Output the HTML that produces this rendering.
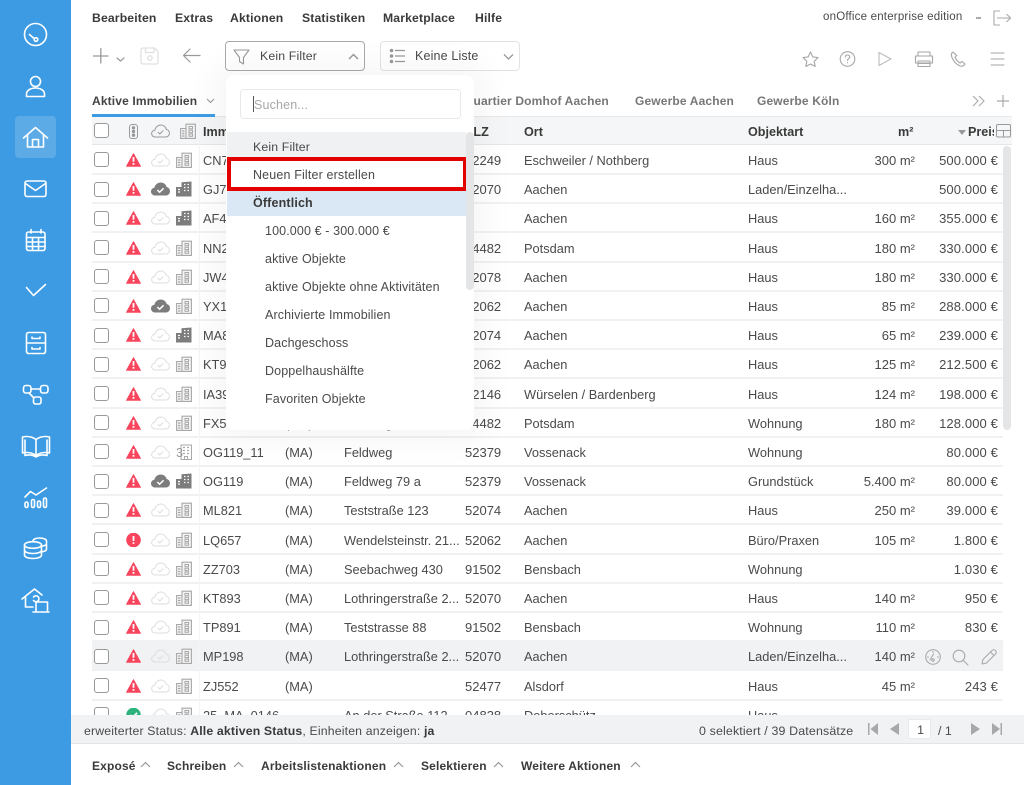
<!DOCTYPE html>
<html lang="de">
<head>
<meta charset="utf-8">
<title>onOffice</title>
<style>
*{box-sizing:border-box}
html,body{margin:0;padding:0;width:1024px;height:785px;overflow:hidden;background:#fff}
body{font-family:"Liberation Sans",sans-serif;font-size:13px;color:#4a4a4a;position:relative}
.a{position:absolute;white-space:nowrap}
#side{position:absolute;left:0;top:0;width:71px;height:785px;background:#3d9be3}
#sidebox{position:absolute;left:15px;top:116px;width:41px;height:42px;background:rgba(255,255,255,.16);border-radius:4px}
.m{position:absolute;top:11px;font-weight:bold;font-size:12.2px;color:#3a3a3a;letter-spacing:.15px;white-space:nowrap}
.tab{position:absolute;top:94px;font-size:12px;font-weight:bold;color:#777;letter-spacing:.15px;white-space:nowrap}
#head{position:absolute;left:92px;top:116px;width:920px;height:29px;background:#f5f6f7;border-top:1px solid #e8e9ea;border-bottom:1px solid #e6e7e8}
.h{position:absolute;top:125px;font-weight:bold;font-size:12.6px;color:#3a3a3a;white-space:nowrap}
.r{position:absolute;left:92px;width:911px;height:29.2px;border-bottom:2px solid #f0f1f2;overflow:hidden}
.r.hover{background:#f1f2f4}
.r span{position:absolute;top:7px;white-space:nowrap;font-size:12.8px}
.cb{position:absolute;left:2px;top:6.5px;width:15px;height:15px;border:1.5px solid #999;border-radius:3px;background:#fff}
.r svg{position:absolute}
.i1{left:34px;top:7px;width:15px;height:14px}
.i2{left:59px;top:7px;width:19px;height:14px}
.i3{left:84px;top:6px;width:16px;height:16px}
.c1{left:111px}.c2{left:193px}.c3{left:252px}.c5{left:432px}.c6{left:656px}
.r span.c4{left:373px;font-size:13px}
.r span.c7{right:88px;font-size:13px}
.r span.c8{right:5px;font-size:13px;letter-spacing:.12px}
#dd{position:absolute;left:226px;top:75px;width:248px;height:355px;background:#fff;border-radius:8px;box-shadow:0 0 30px 14px rgba(0,0,0,.035)}
.o{position:absolute;left:265px;font-size:12.5px;color:#4a4a4a;white-space:nowrap;letter-spacing:.12px}
#stat{position:absolute;left:71px;top:715px;width:953px;height:29px;background:#f1f2f4;border-bottom:1px solid #e3e4e6}
.b{position:absolute;top:759px;font-weight:bold;font-size:12px;color:#3a3a3a;white-space:nowrap;letter-spacing:.15px}
</style>
</head>
<body>
<svg width="0" height="0" style="position:absolute">
<defs>
<symbol id="tri" viewBox="0 0 15 14"><path d="M7.5 .6 14.6 13.4H.4Z" fill="#f8445c" stroke="#f8445c" stroke-width=".8" stroke-linejoin="round"/><path d="M7.5 4V8.8M7.5 10v1.700" stroke="#fff" stroke-width="1.800"/></symbol>
<symbol id="circ" viewBox="0 0 15 14"><circle cx="7.5" cy="7" r="7.3" fill="#f8445c"/><path d="M7.5 3V8M7.5 9.3v1.6" stroke="#fff" stroke-width="1.8"/></symbol>
<symbol id="ok" viewBox="0 0 15 14"><circle cx="7.5" cy="7" r="7.3" fill="#2db27d"/><path d="M4 7 6.7 9.6 11 4.8" stroke="#fff" stroke-width="1.8" fill="none"/></symbol>
<symbol id="cl" viewBox="0 0 19 14"><path d="M5 13H4.200C2 13 .6 11.400 .6 9.600 .6 7.700 2 6.300 3.800 6.200 4.400 3.400 6.800 1 9.800 1c2.800 0 5 1.900 5.500 4.500 1.900.2 3.100 1.800 3.100 3.800 0 2-1.500 3.700-3.600 3.700Z" fill="none" stroke="#dedede" stroke-width="1"/><path d="M6.800 8 8.800 10 12.200 6.500" fill="none" stroke="#dedede" stroke-width="1"/></symbol>
<symbol id="clh" viewBox="0 0 19 14"><path d="M5 13H4.200C2 13 .6 11.400 .6 9.600 .6 7.700 2 6.300 3.800 6.200 4.400 3.400 6.800 1 9.800 1c2.800 0 5 1.900 5.500 4.500 1.900.2 3.100 1.800 3.100 3.800 0 2-1.500 3.700-3.600 3.700Z" fill="none" stroke="#999" stroke-width="1"/><path d="M6.800 8 8.800 10 12.200 6.500" fill="none" stroke="#999" stroke-width="1"/></symbol>
<symbol id="clf" viewBox="0 0 19 14"><path d="M5 13.500H4.200C1.800 13.500 0 11.600 0 9.600 0 7.500 1.500 5.900 3.400 5.700 4 2.800 6.600 .5 9.800 .5c3 0 5.300 2 5.900 4.600 2 .3 3.300 2.100 3.300 4.200 0 2.300-1.700 4.200-4 4.200Z" fill="#7d7d7d"/><path d="M6.300 8 8.600 10.200 12.600 6.300" fill="none" stroke="#fff" stroke-width="1.500"/></symbol>
<symbol id="bo" viewBox="0 0 16 16"><path d="M.6 5.500H6V15.400H.6ZM6 1.200H15.400V15.400H6Z" fill="#f4f4f4" stroke="#a8a8a8" stroke-width="1.100"/><path d="M2 8h2.500M2 10.500h2.500M2 13h2.500" stroke="#a8a8a8" stroke-width="1.200"/><path d="M9 3.500h3.500v2.300H9ZM9 7.300h3.500v2.300H9ZM9 11h3.500v2.300H9Z" fill="none" stroke="#a8a8a8" stroke-width="1"/></symbol>
<symbol id="bf" viewBox="0 0 16 16"><path d="M0 6H5.500V1.200L15.500 .5V15.500H0Z" fill="#7d7d7d"/><path d="M2 8.500h2M2 11h2M8 3.500h1.500M11.500 3.500H13M8 6.500h1.500M11.500 6.500H13M8 9.500h1.500M11.500 9.500H13" stroke="#fff" stroke-width="1.300"/></symbol>
<symbol id="b3" viewBox="0 0 16 16"><path d="M5 1H15.500V15.500H5Z" fill="#fff" stroke="#aaa"/><path d="M7 3.500h2M11 3.500h2M7 6.500h2M11 6.500h2M7 9.500h2M11 9.500h2" stroke="#aaa" stroke-width="1.300"/><path d="M8.500 15.500v-3h3v3" fill="none" stroke="#aaa"/></symbol>
</defs>
</svg>

<div id="side"></div>
<div id="sidebox"></div>
<svg class="a" style="left:0;top:0;z-index:2" width="71" height="785" fill="none" stroke="#fff" stroke-width="1.600" stroke-linecap="round" stroke-linejoin="round">
<circle cx="35.500" cy="34.500" r="11"/><path d="M29.500 34.500 34 38.500"/><circle cx="36" cy="39.500" r="1.800"/>
<circle cx="35.500" cy="81.500" r="5"/><path d="M26.500 96.500V94c0-3.500 4-6 9-6s9 2.500 9 6v2.500Z"/>
<path d="M23.500 138 35.500 127.500 47.500 138M27.500 134.500V147H43.500V134.500M32.500 147V139.500H38.500V147"/>
<rect x="25" y="181" width="21" height="15.500" rx="2"/><path d="M25.500 183.500 35.500 190.500 45.500 183.500"/>
<rect x="26.500" y="232" width="18.500" height="18.500" rx="2"/><path d="M26.500 237.500H45M26.500 242H45M26.500 246.500H45M32.500 237.500V250.500M38.500 237.500V250.500M31 229.500V233M41 229.500V233"/>
<path d="M26.500 287.500 33.500 295.500 45.500 284.500"/>
<rect x="26.500" y="332.500" width="19" height="21" rx="2"/><path d="M26.500 343H45.500M32 337v1.500h8V337M32 347.500V349h8v-1.500"/>
<rect x="23.500" y="385.500" width="7.500" height="7.500" rx="2.500"/><rect x="40.500" y="385.500" width="7.500" height="7.500" rx="2.500"/><rect x="33.500" y="397" width="7.500" height="7" rx="2"/><path d="M31 389H40.500M29 393 34 398"/>
<path d="M36 439.500C32 436.500 27 436 22.500 437V453C27 452 32 452.500 36 455.500 40 452.500 45 452 49.500 453V437C45 436 40 436.500 36 439.500ZM36 439.500V455.500M25 440V455.500C29 454.500 33 455 36 457 39 455 43 454.500 47 455.500V440"/>
<path d="M25 497 30.500 491.500 36 495 46.500 488"/><rect x="25" y="502" width="3" height="5.500" rx="1.500"/><rect x="31.500" y="499.500" width="3" height="8" rx="1.500"/><rect x="37.500" y="501" width="3" height="6.500" rx="1.500"/><rect x="43.500" y="498" width="3" height="9.500" rx="1.500"/>
<ellipse cx="33" cy="545" rx="8.500" ry="3.300"/><path d="M24.500 545V555C24.500 557 28 558.500 33 558.500S41.500 557 41.500 555V545M24.500 550C24.500 552 28 553.500 33 553.500S41.500 552 41.500 550"/><path d="M33 541C33 539 36.500 538 39.500 538 43.500 538 46.500 539.200 46.500 541V549C46.500 550.500 44.500 551.500 41.500 551.800M41.500 546C44.500 546 46.500 545 46.500 543.500"/>
<path d="M22 599 34.500 589 42 595M25.500 596.500V607H33M33.500 600.500A3 3 0 1 0 33.500 597M33 612H49M36 611V602H47.500V611"/>
</svg>

<div class="m" style="left:92px">Bearbeiten</div>
<div class="m" style="left:175px">Extras</div>
<div class="m" style="left:230px">Aktionen</div>
<div class="m" style="left:302px">Statistiken</div>
<div class="m" style="left:383px">Marketplace</div>
<div class="m" style="left:475px">Hilfe</div>
<div class="a" style="left:823px;top:11px;font-size:11.500px;color:#4a4a4a;letter-spacing:.2px">onOffice enterprise edition</div>
<svg class="a" style="left:970px;top:8px" width="45" height="20" fill="none" stroke="#aaa" stroke-width="1.100"><path d="M6 10H11" stroke="#666"/><path d="M30 3H24V17H30M27 10H40M36.500 6 40.500 10 36.500 14"/></svg>

<svg class="a" style="left:90px;top:40px" width="120" height="30" fill="none" stroke-linecap="round" stroke-linejoin="round">
<path d="M3.500 16H18M10.800 8.500V23" stroke="#999" stroke-width="1.300"/>
<path d="M27 18 30.500 21 34 18" stroke="#999" stroke-width="1.200"/>
<path d="M53 8H64.500L68 11.500V22C68 23 67.300 24 66 24H53C52 24 51 23 51 22V10C51 9 52 8 53 8ZM55.500 8.500V12.500H64V8.500" stroke="#dfe0e2" stroke-width="1.300"/><circle cx="60" cy="18" r="2.200" stroke="#dfe0e2" stroke-width="1.300"/>
<path d="M94 15.500H110M100 9 93.500 15.500 100 22" stroke="#999" stroke-width="1.200"/>
</svg>

<div class="a" style="left:225px;top:41px;width:140px;height:30px;border:1px solid #a9a9a9;border-radius:4px;background:#fff"></div>
<svg class="a" style="left:232px;top:48px" width="20" height="18" fill="none" stroke="#999" stroke-width="1.100" stroke-linejoin="round"><path d="M2 2H17L11.500 9.500V16L7.500 13.500V9.500Z"/></svg>
<div class="a" style="left:260px;top:49px;font-size:12.300px;letter-spacing:.15px">Kein Filter</div>
<svg class="a" style="left:347px;top:52px" width="14" height="10" fill="none" stroke="#999" stroke-width="1.500"><path d="M2 7 6.500 2.500 11 7"/></svg>

<div class="a" style="left:380px;top:41px;width:140px;height:30px;border:1px solid #e2e3e5;border-radius:4px;background:#fff"></div>
<svg class="a" style="left:389px;top:48px" width="18" height="16" stroke="#999" stroke-width="1.200"><path d="M6 2.500H16M6 8H16M6 13.500H16"/><circle cx="2.500" cy="2.500" r="1.200" fill="#999"/><circle cx="2.500" cy="8" r="1.200" fill="#999"/><circle cx="2.500" cy="13.500" r="1.200" fill="#999"/></svg>
<div class="a" style="left:415px;top:49px;font-size:12.500px;letter-spacing:.15px">Keine Liste</div>
<svg class="a" style="left:502px;top:52px" width="14" height="10" fill="none" stroke="#999" stroke-width="1.300"><path d="M2 2.500 6.500 7 11 2.500"/></svg>

<svg class="a" style="left:795px;top:44px" width="215" height="30" fill="none" stroke="#a6a6a6" stroke-width="1.100" stroke-linejoin="round" stroke-linecap="round">
<path d="M15.500 8 17.800 12.900 23 13.600 19.200 17.300 20.200 22.500 15.500 20 10.800 22.500 11.800 17.300 8 13.600 13.200 12.900Z"/>
<circle cx="52.500" cy="15" r="7.300"/><path d="M50.300 13C50.300 11.500 51.300 11 52.500 11 53.800 11 54.800 11.800 54.800 13 54.800 14.600 52.500 14.800 52.500 16.500M52.500 18.500v.3"/>
<path d="M84 8.500 96 15 84 21.500Z" stroke="#bcbcbc"/>
<path d="M123 12V8H135V12M120.500 12H137.500V19H120.500ZM123 17V22.500H135V17ZM123 19.500H135"/>
<path d="M158 8C156 9 156 11 157 13.500 158.500 17 161.500 20.500 165 22 167 22.500 169 22 170 20L167 17.500 165 19C163 18 161 15.500 160 13L161.800 11.500Z"/>
<path d="M196 9H209M196 15H209M196 21H209"/>
</svg>

<div class="tab" style="left:92px;color:#444">Aktive Immobilien</div>
<svg class="a" style="left:205px;top:97px" width="12" height="8" fill="none" stroke="#999" stroke-width="1.100"><path d="M2 2 5.500 5.500 9 2"/></svg>
<div class="a" style="left:92px;top:114px;width:123px;height:3px;background:#3d9be3;z-index:2"></div>
<div class="tab" style="left:464px">Quartier Domhof Aachen</div>
<div class="tab" style="left:635px">Gewerbe Aachen</div>
<div class="tab" style="left:757px">Gewerbe Köln</div>
<svg class="a" style="left:970px;top:92px" width="42" height="18" fill="none" stroke="#aaa" stroke-width="1.100"><path d="M3 4 8 9 3 14M9 4 14 9 9 14"/><path d="M27 9H39M33 3V15" stroke-width="1.200"/></svg>

<div id="head"></div>
<div class="cb" style="left:94px;top:123px"></div>
<svg class="a" style="left:129px;top:124px" width="9" height="15" fill="none" stroke="#999"><rect x=".5" y=".5" width="8" height="14" rx="2.500"/><circle cx="4.500" cy="3.800" r="1.200" fill="#999"/><circle cx="4.500" cy="7.500" r="1.200" fill="#999"/><circle cx="4.500" cy="11.200" r="1.200" fill="#999"/></svg>
<svg class="a" style="left:151px;top:124px" width="19" height="14"><use href="#clh"/></svg>
<svg class="a" style="left:180px;top:123px" width="16" height="16"><use href="#bo"/></svg>
<div class="h" style="left:203px">Immobilien</div>
<div class="h" style="left:465px">PLZ</div>
<div class="h" style="left:524px">Ort</div>
<div class="h" style="left:748px">Objektart</div>
<div class="h" style="left:898px">m²</div>
<div class="a" style="left:958px;top:130px;width:0;height:0;border:4px solid transparent;border-top:5px solid #999;border-bottom:0"></div>
<div class="a" style="left:968px;top:125px;width:26px;overflow:hidden;font-weight:bold;font-size:12.600px;color:#3a3a3a">Preis</div>
<svg class="a" style="left:995px;top:124px;background:#f5f6f7" width="17" height="14" fill="none" stroke="#999"><rect x="1.500" y=".5" width="14" height="12.500" rx="1.500"/><path d="M1.500 6.500H15.500M8.500 6.500V13"/></svg>

<div class="r" style="top:145.900px"><div class="cb"></div><svg class="i1"><use href="#tri"/></svg><svg class="i2"><use href="#cl"/></svg><svg class="i3"><use href="#bo"/></svg><span class="c1">CN712</span><span class="c2">(MA)</span><span class="c4">52249</span><span class="c5">Eschweiler / Nothberg</span><span class="c6">Haus</span><span class="c7">300 m²</span><span class="c8">500.000 €</span></div>
<div class="r" style="top:175.100px"><div class="cb"></div><svg class="i1"><use href="#tri"/></svg><svg class="i2"><use href="#clf"/></svg><svg class="i3"><use href="#bf"/></svg><span class="c1">GJ744</span><span class="c2">(MA)</span><span class="c4">52070</span><span class="c5">Aachen</span><span class="c6">Laden/Einzelha...</span><span class="c8">500.000 €</span></div>
<div class="r" style="top:204.300px"><div class="cb"></div><svg class="i1"><use href="#tri"/></svg><svg class="i2"><use href="#cl"/></svg><svg class="i3"><use href="#bf"/></svg><span class="c1">AF431</span><span class="c2">(MA)</span><span class="c5">Aachen</span><span class="c6">Haus</span><span class="c7">160 m²</span><span class="c8">355.000 €</span></div>
<div class="r" style="top:233.500px"><div class="cb"></div><svg class="i1"><use href="#tri"/></svg><svg class="i2"><use href="#cl"/></svg><svg class="i3"><use href="#bo"/></svg><span class="c1">NN271</span><span class="c2">(MA)</span><span class="c4">14482</span><span class="c5">Potsdam</span><span class="c6">Haus</span><span class="c7">180 m²</span><span class="c8">330.000 €</span></div>
<div class="r" style="top:262.700px"><div class="cb"></div><svg class="i1"><use href="#tri"/></svg><svg class="i2"><use href="#cl"/></svg><svg class="i3"><use href="#bo"/></svg><span class="c1">JW451</span><span class="c2">(MA)</span><span class="c4">52078</span><span class="c5">Aachen</span><span class="c6">Haus</span><span class="c7">180 m²</span><span class="c8">330.000 €</span></div>
<div class="r" style="top:291.900px"><div class="cb"></div><svg class="i1"><use href="#tri"/></svg><svg class="i2"><use href="#clf"/></svg><svg class="i3"><use href="#bo"/></svg><span class="c1">YX112</span><span class="c2">(MA)</span><span class="c4">52062</span><span class="c5">Aachen</span><span class="c6">Haus</span><span class="c7">85 m²</span><span class="c8">288.000 €</span></div>
<div class="r" style="top:321.100px"><div class="cb"></div><svg class="i1"><use href="#tri"/></svg><svg class="i2"><use href="#cl"/></svg><svg class="i3"><use href="#bf"/></svg><span class="c1">MA812</span><span class="c2">(MA)</span><span class="c4">52074</span><span class="c5">Aachen</span><span class="c6">Haus</span><span class="c7">65 m²</span><span class="c8">239.000 €</span></div>
<div class="r" style="top:350.300px"><div class="cb"></div><svg class="i1"><use href="#tri"/></svg><svg class="i2"><use href="#cl"/></svg><svg class="i3"><use href="#bo"/></svg><span class="c1">KT991</span><span class="c2">(MA)</span><span class="c4">52062</span><span class="c5">Aachen</span><span class="c6">Haus</span><span class="c7">125 m²</span><span class="c8">212.500 €</span></div>
<div class="r" style="top:379.500px"><div class="cb"></div><svg class="i1"><use href="#tri"/></svg><svg class="i2"><use href="#cl"/></svg><svg class="i3"><use href="#bo"/></svg><span class="c1">IA391</span><span class="c2">(MA)</span><span class="c4">52146</span><span class="c5">Würselen / Bardenberg</span><span class="c6">Haus</span><span class="c7">124 m²</span><span class="c8">198.000 €</span></div>
<div class="r" style="top:408.700px"><div class="cb"></div><svg class="i1"><use href="#tri"/></svg><svg class="i2"><use href="#cl"/></svg><svg class="i3"><use href="#bo"/></svg><span class="c1">FX571</span><span class="c2">(MA)</span><span class="c3">Feldweg</span><span class="c4">14482</span><span class="c5">Potsdam</span><span class="c6">Wohnung</span><span class="c7">180 m²</span><span class="c8">128.000 €</span></div>
<div class="r" style="top:437.900px"><div class="cb"></div><svg class="i1"><use href="#tri"/></svg><svg class="i2"><use href="#cl"/></svg><svg class="i3"><use href="#b3"/></svg><span style="left:84px;color:#999">3</span><span class="c1">OG119_11</span><span class="c2">(MA)</span><span class="c3">Feldweg</span><span class="c4">52379</span><span class="c5">Vossenack</span><span class="c6">Wohnung</span><span class="c8">80.000 €</span></div>
<div class="r" style="top:467.100px"><div class="cb"></div><svg class="i1"><use href="#tri"/></svg><svg class="i2"><use href="#clf"/></svg><svg class="i3"><use href="#bf"/></svg><span class="c1">OG119</span><span class="c2">(MA)</span><span class="c3">Feldweg 79 a</span><span class="c4">52379</span><span class="c5">Vossenack</span><span class="c6">Grundstück</span><span class="c7">5.400 m²</span><span class="c8">80.000 €</span></div>
<div class="r" style="top:496.300px"><div class="cb"></div><svg class="i1"><use href="#tri"/></svg><svg class="i2"><use href="#cl"/></svg><svg class="i3"><use href="#bo"/></svg><span class="c1">ML821</span><span class="c2">(MA)</span><span class="c3">Teststraße 123</span><span class="c4">52074</span><span class="c5">Aachen</span><span class="c6">Haus</span><span class="c7">250 m²</span><span class="c8">39.000 €</span></div>
<div class="r" style="top:525.500px"><div class="cb"></div><svg class="i1"><use href="#circ"/></svg><svg class="i2"><use href="#cl"/></svg><svg class="i3"><use href="#bo"/></svg><span class="c1">LQ657</span><span class="c2">(MA)</span><span class="c3">Wendelsteinstr. 21...</span><span class="c4">52062</span><span class="c5">Aachen</span><span class="c6">Büro/Praxen</span><span class="c7">105 m²</span><span class="c8">1.800 €</span></div>
<div class="r" style="top:554.700px"><div class="cb"></div><svg class="i1"><use href="#tri"/></svg><svg class="i2"><use href="#cl"/></svg><svg class="i3"><use href="#bo"/></svg><span class="c1">ZZ703</span><span class="c2">(MA)</span><span class="c3">Seebachweg 430</span><span class="c4">91502</span><span class="c5">Bensbach</span><span class="c6">Wohnung</span><span class="c8">1.030 €</span></div>
<div class="r" style="top:583.900px"><div class="cb"></div><svg class="i1"><use href="#tri"/></svg><svg class="i2"><use href="#cl"/></svg><svg class="i3"><use href="#bo"/></svg><span class="c1">KT893</span><span class="c2">(MA)</span><span class="c3">Lothringerstraße 2...</span><span class="c4">52070</span><span class="c5">Aachen</span><span class="c6">Haus</span><span class="c7">140 m²</span><span class="c8">950 €</span></div>
<div class="r" style="top:613.100px"><div class="cb"></div><svg class="i1"><use href="#tri"/></svg><svg class="i2"><use href="#cl"/></svg><svg class="i3"><use href="#bo"/></svg><span class="c1">TP891</span><span class="c2">(MA)</span><span class="c3">Teststrasse 88</span><span class="c4">91502</span><span class="c5">Bensbach</span><span class="c6">Wohnung</span><span class="c7">110 m²</span><span class="c8">830 €</span></div>
<div class="r hover" style="top:642.300px"><div class="cb"></div><svg class="i1"><use href="#tri"/></svg><svg class="i2"><use href="#cl"/></svg><svg class="i3"><use href="#bo"/></svg><span class="c1">MP198</span><span class="c2">(MA)</span><span class="c3">Lothringerstraße 2...</span><span class="c4">52070</span><span class="c5">Aachen</span><span class="c6">Laden/Einzelha...</span><span class="c7">140 m²</span></div>
<div class="r" style="top:671.500px"><div class="cb"></div><svg class="i1"><use href="#tri"/></svg><svg class="i2"><use href="#cl"/></svg><svg class="i3"><use href="#bo"/></svg><span class="c1">ZJ552</span><span class="c2">(MA)</span><span class="c4">52477</span><span class="c5">Alsdorf</span><span class="c6">Haus</span><span class="c7">45 m²</span><span class="c8">243 €</span></div>
<div class="r" style="top:700.700px"><div class="cb"></div><svg class="i1"><use href="#ok"/></svg><svg class="i2"><use href="#cl"/></svg><svg class="i3"><use href="#bo"/></svg><span class="c1">25_MA_0146</span><span class="c3">An der Straße 112</span><span class="c4">04838</span><span class="c5">Doberschütz</span><span class="c6">Haus</span></div>

<div class="a" style="left:199px;top:117px;width:1px;height:598px;background:#f3f4f5"></div>

<svg class="a" style="left:922px;top:646px" width="80" height="22" fill="none" stroke="#aaa" stroke-width="1.100" stroke-linecap="round" stroke-linejoin="round">
<circle cx="11" cy="11" r="7.300"/><path d="M8 14 11.500 8M5.500 11h1M15.500 11h1M11 5.500v1"/><circle cx="11" cy="14" r="1.200"/>
<circle cx="37" cy="10" r="5.800"/><path d="M41.500 14.500 46 19"/>
<path d="M60 18 61 13.500 70 4.500C71 3.500 72.500 3.500 73.500 4.500 74.500 5.500 74.500 7 73.500 8L64.500 17ZM68.500 6 72 9.500"/>
</svg>

<div class="a" style="left:1003px;top:146px;width:8px;height:284px;background:#e3e5e7;border-radius:4px"></div>

<div id="dd"></div>
<div class="a" style="left:240px;top:89px;width:221px;height:30px;border:1px solid #e8e9ea;border-radius:4px;background:#fff"></div>
<div class="a" style="left:253px;top:96px;width:1px;height:16px;background:#555"></div>
<div class="a" style="left:254px;top:98px;font-size:12.500px;color:#a8a8a8;letter-spacing:.15px">Suchen...</div>
<div class="a" style="left:227px;top:132px;width:239px;height:26px;background:#f0f1f3"></div>
<div class="a" style="left:253px;top:140px;font-size:12.300px;letter-spacing:.15px">Kein Filter</div>
<div class="a" style="left:227px;top:190px;width:239px;height:26px;background:#dae8f5"></div>
<div class="a" style="left:227px;top:157px;width:240px;height:33.500px;border:4px solid #e30000;background:#fff"></div>
<div class="a" style="left:253px;top:168px;font-size:12.500px;letter-spacing:.15px">Neuen Filter erstellen</div>
<div class="a" style="left:253px;top:196px;font-size:12.500px;font-weight:bold;color:#3a3a3a;letter-spacing:.15px">Öffentlich</div>
<div class="o" style="top:224px">100.000 € - 300.000 €</div>
<div class="o" style="top:252px">aktive Objekte</div>
<div class="o" style="top:280px">aktive Objekte ohne Aktivitäten</div>
<div class="o" style="top:308px">Archivierte Immobilien</div>
<div class="o" style="top:336px">Dachgeschoss</div>
<div class="o" style="top:364px">Doppelhaushälfte</div>
<div class="o" style="top:392px">Favoriten Objekte</div>
<div class="a" style="left:466px;top:132px;width:8px;height:158px;background:#e3e5e7;border-radius:4px"></div>

<div id="stat"></div>
<div class="a" style="left:84px;top:724px;font-size:12.300px;letter-spacing:.15px">erweiterter Status: <b style="color:#3a3a3a">Alle aktiven Status</b>, Einheiten anzeigen: <b style="color:#3a3a3a">ja</b></div>
<div class="a" style="left:699px;top:724px;font-size:12.400px;letter-spacing:.15px">0 selektiert / 39 Datensätze</div>
<svg class="a" style="left:866px;top:722px" width="140" height="16" fill="#a8a8a8"><path d="M2 1H3.500V13H2ZM12 1V13L4.500 7ZM33 1V13L24 7Z"/><path d="M105 1V13L114 7ZM126 1V13L134 7ZM134.500 1H136V13H134.500Z"/></svg>
<div class="a" style="left:908px;top:719px;width:23px;height:20px;background:#fff;border:1px solid #e9eaec;border-radius:2px;text-align:right;padding:3px 6px 0 0;font-size:12.400px">1</div>
<div class="a" style="left:938px;top:724px;font-size:12.400px">/ 1</div>

<div class="b" style="left:92px">Exposé</div>
<div class="b" style="left:167px">Schreiben</div>
<div class="b" style="left:261px">Arbeitslistenaktionen</div>
<div class="b" style="left:421px">Selektieren</div>
<div class="b" style="left:521px">Weitere Aktionen</div>
<svg class="a" style="left:138px;top:760px" width="510" height="10" fill="none" stroke="#999" stroke-width="1.200"><path d="M3 7 7.500 2.500 12 7M96 7 100.500 2.500 105 7M256 7 260.500 2.500 265 7M356 7 360.500 2.500 365 7M493 7 497.500 2.500 502 7"/></svg>
</body>
</html>
